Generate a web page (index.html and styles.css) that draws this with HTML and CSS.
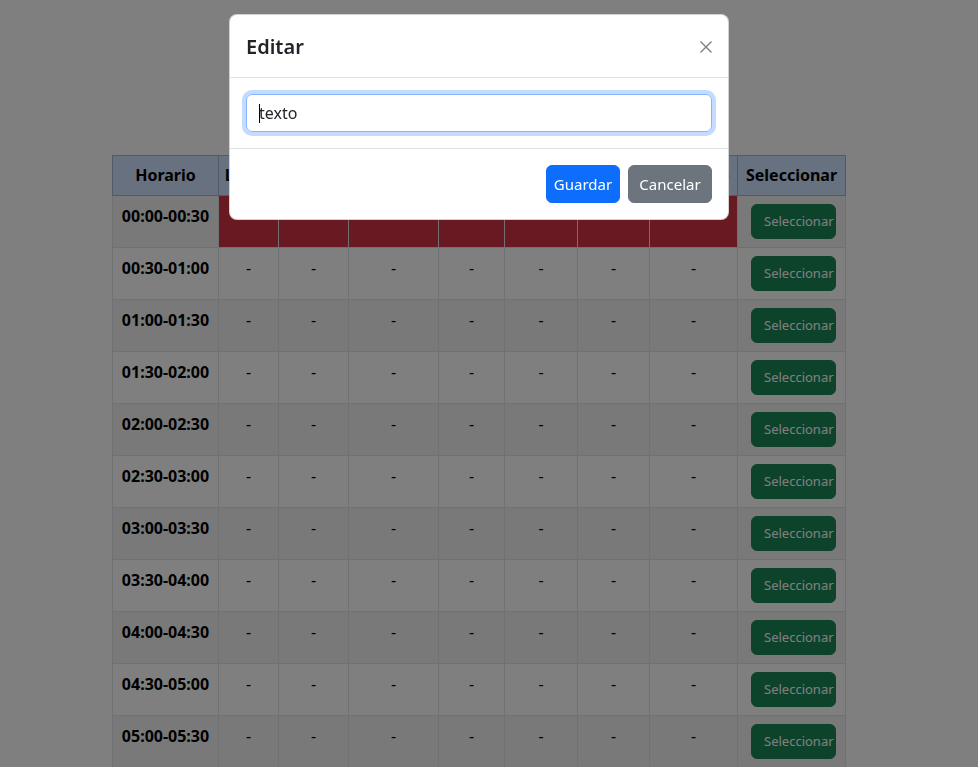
FILE: index.html
```html
<!DOCTYPE html>
<html lang="es">
<head>
<meta charset="utf-8">
<title>Horario</title>
<link rel="stylesheet" href="styles.css">
</head>
<body>
<div class="page">
  <table class="schedule">
    <colgroup>
      <col class="w-hor"><col class="w-lun"><col class="w-mar"><col class="w-mie"><col class="w-jue"><col class="w-vie"><col class="w-sab"><col class="w-dom"><col class="w-sel">
    </colgroup>
    <thead>
      <tr><th>Horario</th><th>Lunes</th><th>Martes</th><th>Miércoles</th><th>Jueves</th><th>Viernes</th><th>Sábado</th><th>Domingo</th><th>Seleccionar</th></tr>
    </thead>
    <tbody>
      <tr><th>00:00-00:30</th><td class="busy"></td><td class="busy"></td><td class="busy"></td><td class="busy"></td><td class="busy"></td><td class="busy"></td><td class="busy"></td><td><button class="btn-sel">Seleccionar</button></td></tr>
      <tr><th>00:30-01:00</th><td>-</td><td>-</td><td>-</td><td>-</td><td>-</td><td>-</td><td>-</td><td><button class="btn-sel">Seleccionar</button></td></tr>
      <tr><th>01:00-01:30</th><td>-</td><td>-</td><td>-</td><td>-</td><td>-</td><td>-</td><td>-</td><td><button class="btn-sel">Seleccionar</button></td></tr>
      <tr><th>01:30-02:00</th><td>-</td><td>-</td><td>-</td><td>-</td><td>-</td><td>-</td><td>-</td><td><button class="btn-sel">Seleccionar</button></td></tr>
      <tr><th>02:00-02:30</th><td>-</td><td>-</td><td>-</td><td>-</td><td>-</td><td>-</td><td>-</td><td><button class="btn-sel">Seleccionar</button></td></tr>
      <tr><th>02:30-03:00</th><td>-</td><td>-</td><td>-</td><td>-</td><td>-</td><td>-</td><td>-</td><td><button class="btn-sel">Seleccionar</button></td></tr>
      <tr><th>03:00-03:30</th><td>-</td><td>-</td><td>-</td><td>-</td><td>-</td><td>-</td><td>-</td><td><button class="btn-sel">Seleccionar</button></td></tr>
      <tr><th>03:30-04:00</th><td>-</td><td>-</td><td>-</td><td>-</td><td>-</td><td>-</td><td>-</td><td><button class="btn-sel">Seleccionar</button></td></tr>
      <tr><th>04:00-04:30</th><td>-</td><td>-</td><td>-</td><td>-</td><td>-</td><td>-</td><td>-</td><td><button class="btn-sel">Seleccionar</button></td></tr>
      <tr><th>04:30-05:00</th><td>-</td><td>-</td><td>-</td><td>-</td><td>-</td><td>-</td><td>-</td><td><button class="btn-sel">Seleccionar</button></td></tr>
      <tr><th>05:00-05:30</th><td>-</td><td>-</td><td>-</td><td>-</td><td>-</td><td>-</td><td>-</td><td><button class="btn-sel">Seleccionar</button></td></tr>
    </tbody>
  </table>
</div>

<div class="backdrop"></div>

<div class="modal-wrap">
  <div class="modal">
    <div class="modal-header">
      <h5 class="modal-title">Editar</h5>
      <button class="btn-close" aria-label="Cerrar">
        <svg width="12" height="12" viewBox="0 0 12 12"><path d="M0.5 0.5L11.5 11.5M11.5 0.5L0.5 11.5" stroke="#000" stroke-width="1.4" fill="none"/></svg>
      </button>
    </div>
    <div class="modal-body">
      <div class="form-control"><span class="caret"></span>texto</div>
    </div>
    <div class="modal-footer">
      <button class="btn btn-primary">Guardar</button>
      <button class="btn btn-secondary">Cancelar</button>
    </div>
  </div>
</div>
</body>
</html>
```
FILE: styles.css
```css
* { box-sizing: border-box; }

body {
  margin: 0;
  font-family: "Noto Sans", "Segoe UI", sans-serif;
  font-size: 16px;
  line-height: 1.5;
  color: #212529;
  background: #fff;
  overflow: hidden;
}

.page {
  width: 958px;
  padding-top: 155px;
}

.schedule {
  width: 733px;
  margin: 0 auto;
  border-collapse: collapse;
  table-layout: fixed;
  text-align: center;
}

.w-hor { width: 106px; }
.w-lun { width: 60px; }
.w-mar { width: 70px; }
.w-mie { width: 90px; }
.w-jue { width: 66px; }
.w-vie { width: 73px; }
.w-sab { width: 72px; }
.w-dom { width: 88px; }
.w-sel { width: 108px; }

.schedule th,
.schedule td {
  padding: 8px;
  border: 1px solid #dee2e6;
  vertical-align: top;
  background: #fff;
}

.schedule thead th {
  background: #cfe2ff;
  border-color: #a6b5cc;
  color: #000;
  font-weight: 700;
  padding: 7px 4px 8px;
  white-space: nowrap;
}

.schedule tbody th {
  font-weight: 700;
  color: #000;
  white-space: nowrap;
  padding: 8px 4px;
}

.schedule tbody td {
  color: #000;
}

.schedule tbody tr:nth-child(odd) > * {
  background: #f2f2f2;
}

.schedule tbody tr > td.busy {
  background: #d13242;
}

.btn-sel {
  display: block;
  width: 85px;
  height: 35px;
  margin-left: 5px;
  padding: 0 0 0 12px;
  text-align: left;
  background: #198754;
  border: 1px solid #198754;
  border-radius: 6px;
  color: #fff;
  font-family: inherit;
  font-size: 13px;
  line-height: 33px;
  white-space: nowrap;
  overflow: visible;
}

.backdrop {
  position: fixed;
  inset: 0;
  background: rgba(0, 0, 0, 0.5);
}

.modal-wrap {
  position: fixed;
  top: 0;
  left: 0;
  width: 958px;
  display: flex;
  justify-content: center;
  padding-top: 14px;
}

.modal {
  width: 500px;
  background: #fff;
  border: 1px solid rgba(0, 0, 0, 0.175);
  border-radius: 8px;
}

.modal-header {
  display: flex;
  align-items: center;
  justify-content: space-between;
  padding: 17px 16px 15px;
  border-bottom: 1px solid #dee2e6;
}

.modal-title {
  margin: 0;
  font-size: 20px;
  font-weight: 600;
  line-height: 30px;
  color: #212529;
}

.btn-close {
  width: 12px;
  height: 12px;
  padding: 0;
  border: 0;
  background: transparent;
  opacity: 0.5;
  display: flex;
}

.modal-body {
  padding: 16px;
}

.form-control {
  height: 38px;
  padding: 6px 12px;
  border: 1px solid #86b7fe;
  border-radius: 6px;
  box-shadow: 0 0 0 4px rgba(13, 110, 253, 0.25);
  font-size: 16px;
  line-height: 24px;
  color: #212529;
  display: flex;
  align-items: center;
}

.caret {
  display: inline-block;
  width: 1px;
  height: 19px;
  background: #000;
  margin-right: -1px;
}

.modal-footer {
  display: flex;
  justify-content: flex-end;
  align-items: center;
  padding: 12px;
  border-top: 1px solid #dee2e6;
}

.btn {
  margin: 4px;
  height: 38px;
  padding: 0;
  border: 1px solid transparent;
  border-radius: 6px;
  color: #fff;
  font-family: inherit;
  font-size: 15px;
  line-height: 24px;
  text-align: center;
  white-space: nowrap;
}

.btn-primary {
  width: 74px;
  background: #0d6efd;
  border-color: #0d6efd;
}

.btn-secondary {
  width: 84px;
  background: #6c757d;
  border-color: #6c757d;
}
```
